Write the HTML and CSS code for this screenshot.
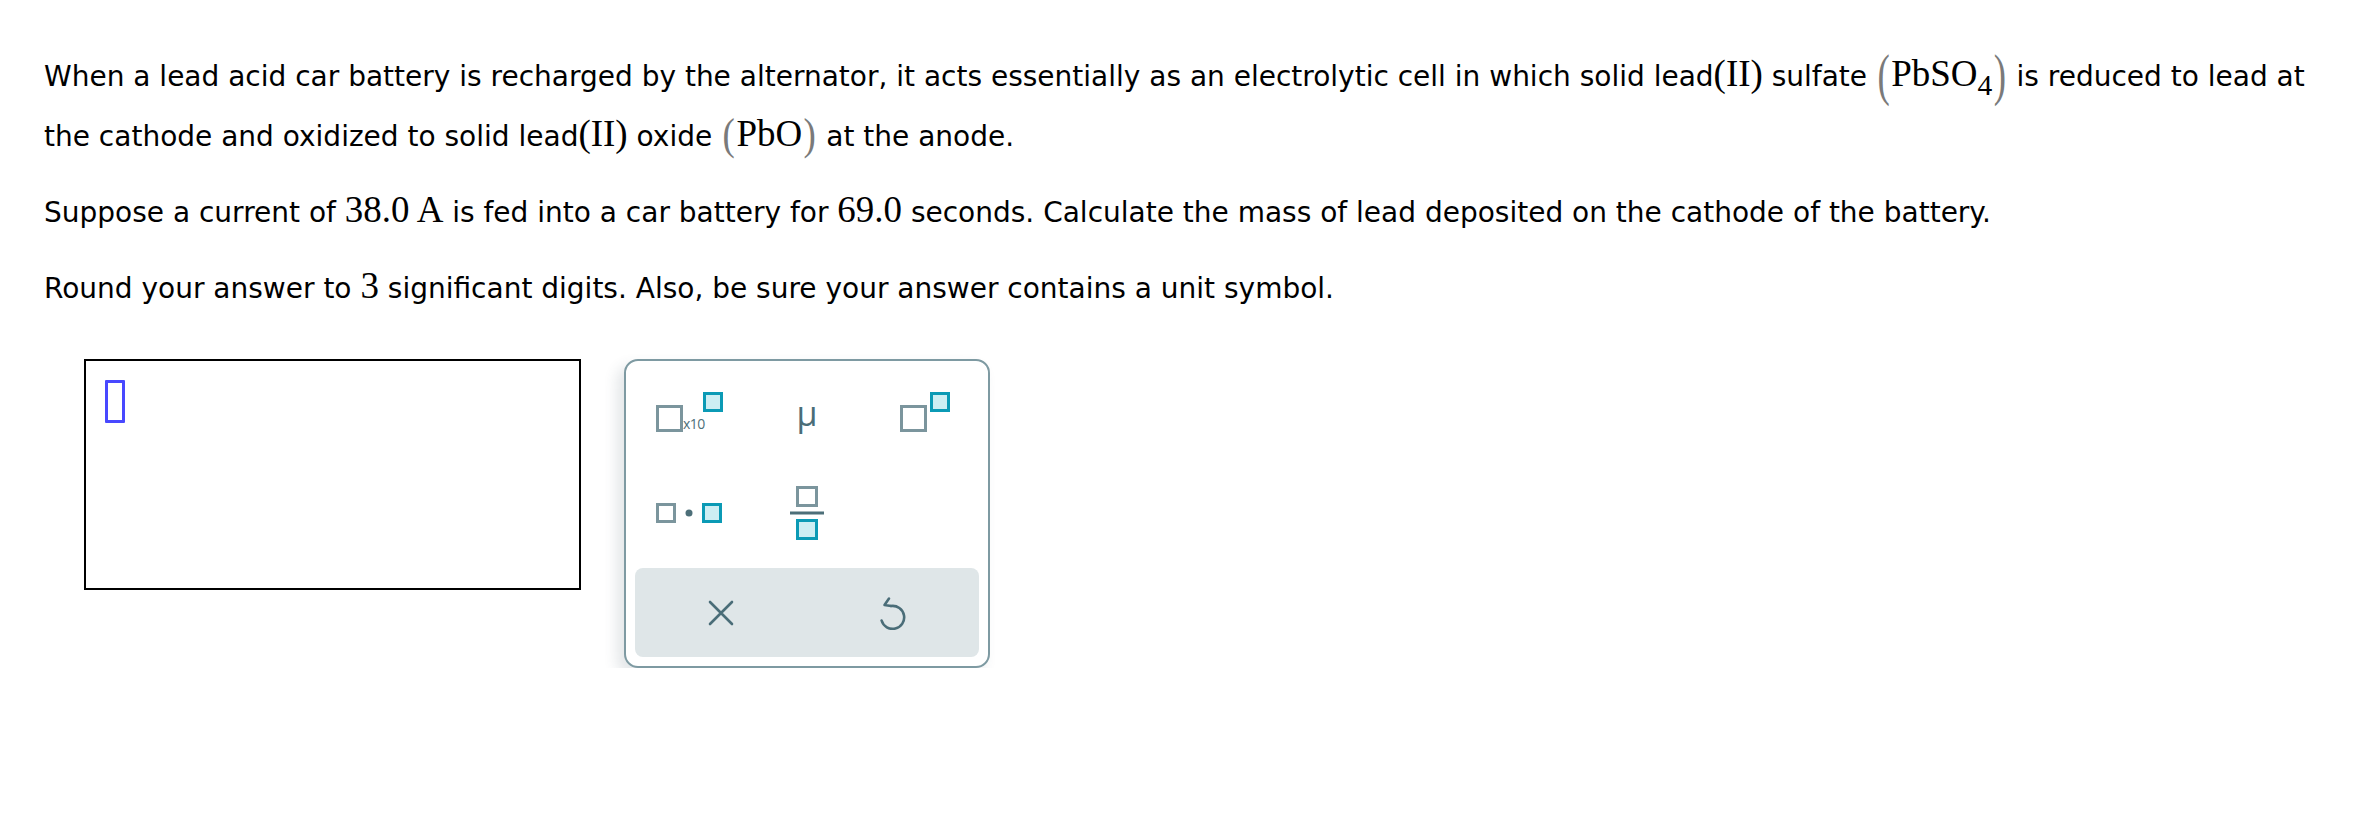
FILE: index.html
```html
<!DOCTYPE html>
<html lang="en">
<head>
<meta charset="utf-8">
<title>Question</title>
<link rel="stylesheet" href="styles.css">
</head>
<body>
<main class="page">
  <section class="question">
    <p class="para">When a lead acid car battery is recharged by the alternator, it acts essentially as an electrolytic cell in which solid lead<span class="m">(II)</span> sulfate <span class="m formula"><span class="paren tall">(</span>PbSO<sub class="sub">4</sub><span class="paren tall">)</span></span> is reduced to lead at the cathode and oxidized to solid lead<span class="m">(II)</span> oxide <span class="m formula"><span class="paren">(</span>PbO<span class="paren">)</span></span> at the anode.</p>
    <p class="para">Suppose a current of <span class="m">38.0 A</span> is fed into a car battery for <span class="m">69.0</span> seconds. Calculate the mass of lead deposited on the cathode of the battery.</p>
    <p class="para">Round your answer to <span class="m">3</span> significant digits. Also, be sure your answer contains a unit symbol.</p>
  </section>

  <section class="answer-row">
    <div class="answer-box"><span class="cursor"></span></div>

    <div class="keypad">
      <div class="keys">
        <div class="key">
          <svg class="ico" width="67" height="40" viewBox="0 0 67 40">
            <rect x="1.5" y="14.5" width="24" height="24" fill="none" stroke="#7b959d" stroke-width="3"/>
            <text class="ico-text" x="27" y="37">x10</text>
            <rect x="48.5" y="1.5" width="17" height="17" fill="#cdeef3" stroke="#0b9ab5" stroke-width="3"/>
          </svg>
        </div>
        <div class="key"><span class="mu">μ</span></div>
        <div class="key">
          <svg class="ico" width="50" height="40" viewBox="0 0 50 40">
            <rect x="1.5" y="14.5" width="24" height="24" fill="none" stroke="#7b959d" stroke-width="3"/>
            <rect x="31.5" y="1.5" width="17" height="17" fill="#cdeef3" stroke="#0b9ab5" stroke-width="3"/>
          </svg>
        </div>
        <div class="key">
          <svg class="ico" width="66" height="20" viewBox="0 0 66 20">
            <rect x="1.5" y="1.5" width="17" height="17" fill="none" stroke="#7b959d" stroke-width="3"/>
            <circle cx="33" cy="10" r="3.5" fill="#4d6f79"/>
            <rect x="47.5" y="1.5" width="17" height="17" fill="#cdeef3" stroke="#0b9ab5" stroke-width="3"/>
          </svg>
        </div>
        <div class="key">
          <svg class="ico" width="34" height="54" viewBox="0 0 34 54">
            <rect x="7.5" y="1.5" width="19" height="18" fill="none" stroke="#7b959d" stroke-width="3"/>
            <rect x="0" y="25.5" width="34" height="3" fill="#4d6f79"/>
            <rect x="7.5" y="34.5" width="19" height="18" fill="#cdeef3" stroke="#0b9ab5" stroke-width="3"/>
          </svg>
        </div>
        <div class="key"></div>
      </div>
      <div class="actions">
        <div class="key">
          <svg class="ico" width="26" height="26" viewBox="0 0 26 26">
            <path d="M2 2 L24 24 M24 2 L2 24" stroke="#4a6d78" stroke-width="2.6" stroke-linecap="round" fill="none"/>
          </svg>
        </div>
        <div class="key">
          <svg class="ico" width="28" height="34" viewBox="0 0 28 34">
            <path d="M12 10 A11.5 11.5 0 1 1 2.6 24.5" stroke="#4a6d78" stroke-width="2.6" stroke-linecap="round" fill="none"/>
            <path d="M10 2.5 L5.5 9 L12 10" stroke="#4a6d78" stroke-width="2.6" stroke-linecap="round" stroke-linejoin="round" fill="none"/>
          </svg>
        </div>
      </div>
    </div>
  </section>
</main>
</body>
</html>
```

FILE: styles.css
```css
html, body {
  margin: 0;
  padding: 0;
  background: #ffffff;
}

.page {
  padding: 0 30px 0 44px;
  font-family: "DejaVu Sans", Verdana, sans-serif;
  font-size: 28px;
  color: #000;
}

.question {
  padding-top: 47px;
}

.para {
  margin: 0 0 16px 0;
  line-height: 60px;
}

.m {
  font-family: "Liberation Serif", "Times New Roman", serif;
  font-size: 1.32em;
  line-height: normal;
}

.formula {
  white-space: nowrap;
}

.sub {
  font-size: 0.8em;
  line-height: normal;
  vertical-align: -0.3em;
}

.paren {
  display: inline-block;
  color: #7a7a7a;
  transform: scaleY(1.2);
  margin: 0 1.5px;
}

.paren.tall {
  transform: scaleY(1.55) translateY(1px);
}

.answer-row {
  display: flex;
  align-items: flex-start;
  gap: 43px;
  margin-top: 40px;
  padding-left: 40px;
}

.answer-box {
  box-sizing: border-box;
  width: 497px;
  height: 231px;
  border: 2px solid #000;
  padding: 19px 0 0 19px;
}

.cursor {
  display: block;
  box-sizing: border-box;
  width: 20px;
  height: 43px;
  border: 3px solid rgba(40, 40, 255, 0.85);
  border-radius: 1px;
}

.keypad {
  box-sizing: border-box;
  width: 366px;
  height: 309px;
  border: 2px solid #7e9aa2;
  border-radius: 14px;
  background: #fff;
  box-shadow: -7px 7px 14px rgba(60, 80, 90, 0.14);
  padding: 0 9px 9px;
  display: flex;
  flex-direction: column;
}

.keys {
  display: grid;
  grid-template-columns: 108px 128px 108px;
  grid-auto-rows: 101px;
}

.key {
  display: flex;
  align-items: center;
  justify-content: center;
}

.ico {
  display: block;
}

.ico-text {
  font-family: "Open Sans", "Noto Sans", sans-serif;
  font-size: 14px;
  fill: #4d6f79;
  letter-spacing: -0.5px;
}

.mu {
  font-family: "Open Sans", "Noto Sans", sans-serif;
  font-size: 34px;
  line-height: 1;
  color: #4a6d78;
  transform: translateY(1px);
}

.actions {
  margin-top: 5px;
  height: 90px;
  background: #dfe6e8;
  border-radius: 8px;
  display: grid;
  grid-template-columns: 1fr 1fr;
}
```
